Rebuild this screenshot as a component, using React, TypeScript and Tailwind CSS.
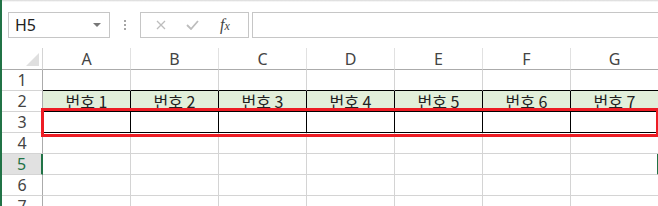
import React from 'react';

const cols = ['A', 'B', 'C', 'D', 'E', 'F', 'G'];
const rows = [1, 2, 3, 4, 5, 6, 7];

const uiFont = { fontFamily: '"Noto Sans", "Open Sans", sans-serif' };
const krFont = { fontFamily: '"Noto Sans CJK KR", "Noto Sans", sans-serif' };

const RowHeader = ({ n }: { n: number }) => {
  const active = n === 5;
  return (
    <div
      className={`w-[41px] h-[21px] shrink-0 flex items-center justify-center text-[16px] leading-none border-b border-[#d4d4d4] ${
        active
          ? 'bg-[#e1e1e1] text-[#217346] border-r-2 border-r-[#217346]'
          : 'bg-white text-[#444] border-r border-r-[#ababab]'
      }`}
      style={uiFont}
    >
      {n}
    </div>
  );
};

const Cell = ({ row, col }: { row: number; col: number }) => {
  const last = col === cols.length - 1;
  let cls = 'w-[88px] h-[21px] shrink-0 border-r border-b border-[#d4d4d4] bg-white';
  let content: React.ReactNode = null;
  if (row === 1) {
    cls = 'w-[88px] h-[21px] shrink-0 border-r border-r-[#d4d4d4] border-b border-b-black bg-white';
  } else if (row === 2) {
    cls = 'w-[88px] h-[21px] shrink-0 border-r border-b border-black bg-[#e2efda] flex items-end justify-center';
    content = (
      <span className="text-[16px] leading-[20px] text-[#222]" style={krFont}>
        번호 {col + 1}
      </span>
    );
  } else if (row === 3) {
    cls = 'w-[88px] h-[21px] shrink-0 border-r border-b border-black bg-white';
  } else if (row === 5 && last) {
    cls = 'w-[88px] h-[21px] shrink-0 border-r-2 border-r-[#217346] border-b border-b-[#d4d4d4] bg-white';
  }
  return <div className={cls}>{content}</div>;
};

export default function App() {
  return (
    <div className="relative w-[658px] h-[206px] overflow-hidden bg-white border-l-2 border-l-[#217346]">
      {/* formula bar area */}
      <div className="h-[48px] bg-gradient-to-b from-[#d6d6d6] via-white to-white bg-[length:100%_4px] bg-no-repeat flex items-start pt-[12px]">
        <div className="ml-[6px] w-[102px] h-[26px] border border-[#c6c6c6] bg-white flex items-center pl-[6px] pr-[8px]">
          <span className="text-[16px] text-[#222] leading-none" style={uiFont}>H5</span>
          <span className="ml-auto w-0 h-0 border-l-[4px] border-r-[4px] border-t-[4px] border-l-transparent border-r-transparent border-t-[#777]" />
        </div>
        <div className="w-[30px] h-[26px] flex flex-col items-center justify-center gap-[2px]">
          <span className="w-[2px] h-[2px] bg-[#a6a6a6]" />
          <span className="w-[2px] h-[2px] bg-[#a6a6a6]" />
          <span className="w-[2px] h-[2px] bg-[#a6a6a6]" />
        </div>
        <div className="w-[109px] h-[26px] border border-[#c6c6c6] bg-white flex items-center">
          <svg className="ml-[15px]" width="10" height="10" viewBox="0 0 10 10">
            <path d="M1 1 L9 9 M9 1 L1 9" stroke="#bdbdbd" strokeWidth="1.3" fill="none" />
          </svg>
          <svg className="ml-[20px]" width="13" height="10" viewBox="0 0 13 10">
            <path d="M1 5 L5 9 L12 1" stroke="#bdbdbd" strokeWidth="1.8" fill="none" />
          </svg>
          <span
            className="ml-[21px] text-[16px] italic text-[#444] leading-none"
            style={{ fontFamily: '"Liberation Serif", serif' }}
          >
            f<span className="text-[12px]">x</span>
          </span>
        </div>
        <div className="ml-[3px] flex-1 h-[26px] border-y border-l border-[#c6c6c6] bg-white" />
      </div>

      {/* column headers */}
      <div className="flex h-[22px]">
        <div className="w-[41px] h-[22px] shrink-0 border-r border-[#d4d4d4] border-b border-b-[#ababab] flex items-end justify-end pr-[3px] pb-[3px]">
          <span className="w-0 h-0 border-l-[13px] border-b-[13px] border-l-transparent border-b-[#dfdfdf]" />
        </div>
        {cols.map((c) => (
          <div
            key={c}
            className="w-[88px] h-[22px] shrink-0 border-r border-r-[#e1e1e1] border-b border-b-[#ababab] flex items-center justify-center text-[16px] text-[#444] leading-none"
            style={uiFont}
          >
            {c}
          </div>
        ))}
      </div>

      {/* rows */}
      {rows.map((r) => (
        <div key={r} className="flex">
          <RowHeader n={r} />
          {cols.map((c, i) => (
            <Cell key={c} row={r} col={i} />
          ))}
        </div>
      ))}

      {/* red highlight annotation */}
      <div className="absolute left-[39px] top-[108px] w-[618px] h-[29px] border-[3px] border-[#ed1c24] pointer-events-none" />
    </div>
  );
}
